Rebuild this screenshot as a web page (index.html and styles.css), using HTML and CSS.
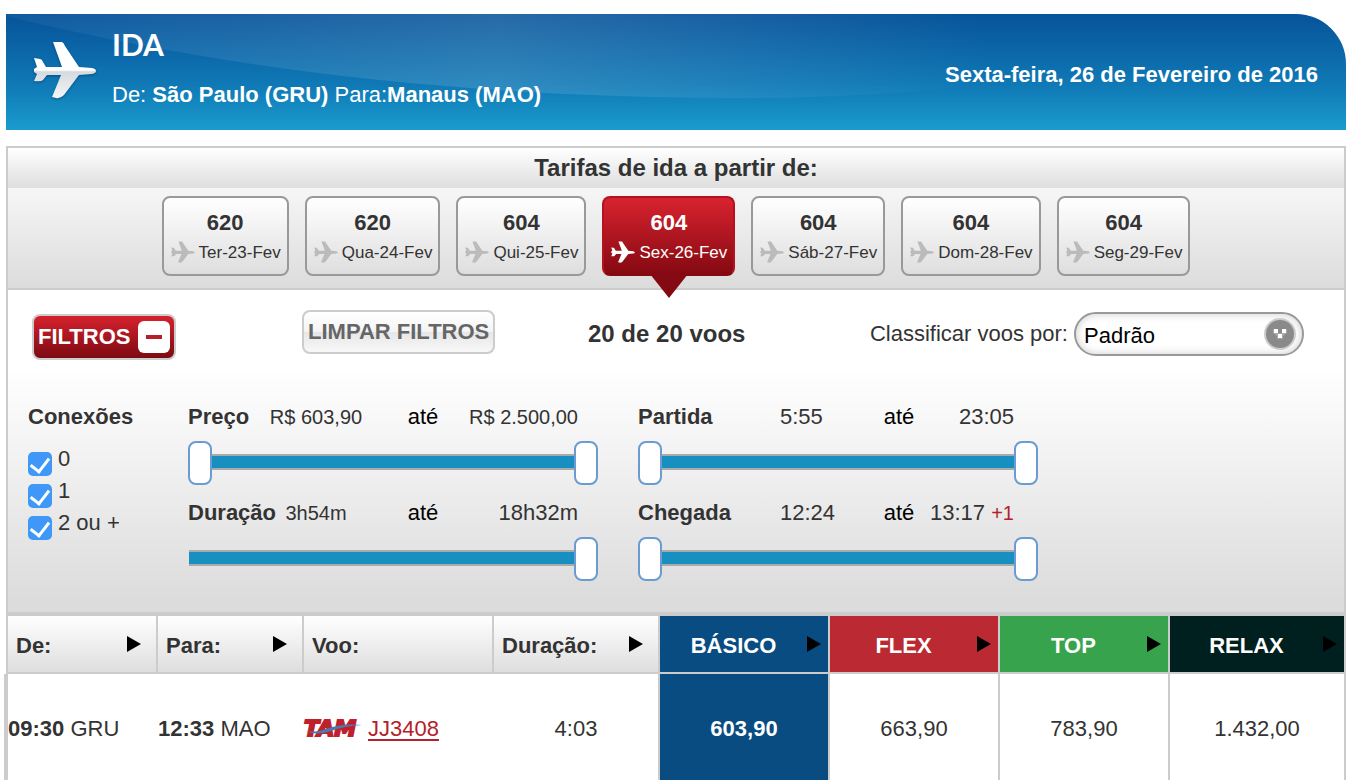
FILE: index.html
```html
<!DOCTYPE html>
<html lang="pt-BR">
<head>
  <meta charset="UTF-8">
  <meta name="viewport" content="width=device-width, initial-scale=1.0">
  <title>Ida - São Paulo (GRU) para Manaus (MAO)</title>
  <link rel="stylesheet" href="styles.css">
</head>
<body>

  <!-- shared icons -->
  <svg class="sprite" aria-hidden="true">
    <symbol id="plane" viewBox="0 0 62 58">
      <path d="M19 1L28 1Q30 2 31 5L45 26L58 27Q62 28 62 30Q62 32 58 33L45 34L30 54Q26 58 22 57L18 56L27 34L13 34L9 39Q7 41 0 40L3 33L0 31L0 28L3 26L0 17L6 18Q8 18 9 21L12 26L28 26Z"/>
    </symbol>
    <symbol id="arrow" viewBox="0 0 14 16">
      <path d="M0 0L14 8L0 16Z"/>
    </symbol>
  </svg>

  <header class="trip">
    <svg class="trip-shine" viewBox="0 0 1340 116" preserveAspectRatio="none" aria-hidden="true">
      <defs>
        <linearGradient id="shine" x1="0" x2="1" y1="0" y2="0">
          <stop offset="0" stop-color="#fff" stop-opacity=".04"/>
          <stop offset=".5" stop-color="#fff" stop-opacity=".13"/>
          <stop offset="1" stop-color="#fff" stop-opacity="0"/>
        </linearGradient>
      </defs>
      <path d="M0 2C200 50 420 82 720 84C800 85 900 80 985 70L985 0L0 0Z" fill="url(#shine)"/>
    </svg>
    <svg class="trip-plane" viewBox="0 0 62 58" aria-hidden="true">
      <defs>
        <linearGradient id="metal" x1="0" x2="0" y1="0" y2="1">
          <stop offset=".5" stop-color="#fff"/>
          <stop offset=".53" stop-color="#d5dade"/>
          <stop offset="1" stop-color="#f4f6f8"/>
        </linearGradient>
      </defs>
      <use href="#plane" fill="url(#metal)"/>
    </svg>
    <div class="trip-info">
      <h1>IDA</h1>
      <p>De: <b>São Paulo (GRU)</b> Para:<b>Manaus (MAO)</b></p>
    </div>
    <p class="trip-date">Sexta-feira, 26 de Fevereiro de 2016</p>
  </header>

  <main class="panel">
    <h2 class="panel-title">Tarifas de ida a partir de:</h2>

    <nav class="days">
      <button class="day"><b>620</b><span><svg><use href="#plane"/></svg>Ter-23-Fev</span></button>
      <button class="day"><b>620</b><span><svg><use href="#plane"/></svg>Qua-24-Fev</span></button>
      <button class="day"><b>604</b><span><svg><use href="#plane"/></svg>Qui-25-Fev</span></button>
      <button class="day active"><b>604</b><span><svg><use href="#plane"/></svg>Sex-26-Fev</span></button>
      <button class="day"><b>604</b><span><svg><use href="#plane"/></svg>Sáb-27-Fev</span></button>
      <button class="day"><b>604</b><span><svg><use href="#plane"/></svg>Dom-28-Fev</span></button>
      <button class="day"><b>604</b><span><svg><use href="#plane"/></svg>Seg-29-Fev</span></button>
    </nav>

    <section class="filters">
      <div class="toolbar">
        <button class="btn-filter">FILTROS <i></i></button>
        <button class="btn-clear">LIMPAR FILTROS</button>
        <strong class="count">20 de 20 voos</strong>
        <div class="sort">
          <label for="sort">Classificar voos por:</label>
          <div class="select">
            <select id="sort">
              <option>Padrão</option>
              <option>Preço</option>
              <option>Duração</option>
            </select>
            <svg viewBox="0 0 32 32" aria-hidden="true">
              <circle cx="16" cy="16" r="16" fill="#ccc"/>
              <circle cx="16" cy="16" r="14" fill="#8a8a8a"/>
              <path d="M9 11h5v4h4v-4h5v4l-4 3v3h-6v-3l-4-3z" fill="#a8a8a8"/>
              <path d="M10 11h4v4h-4zM18 11h4v4h-4zM14 16h4v4h-4z" fill="#fff"/>
            </svg>
          </div>
        </div>
      </div>

      <div class="filter-grid">
        <fieldset class="stops">
          <legend>Conexões</legend>
          <label><input type="checkbox" checked>0</label>
          <label><input type="checkbox" checked>1</label>
          <label><input type="checkbox" checked>2 ou +</label>
        </fieldset>

        <div class="ranges">
          <div class="range-head">
            <b>Preço</b><span class="small from">R$ 603,90</span><em>até</em><span class="small to">R$ 2.500,00</span>
          </div>
          <div class="range">
            <input type="range" min="0" max="100" value="0" aria-label="Preço mínimo">
            <input type="range" min="0" max="100" value="100" aria-label="Preço máximo">
          </div>
          <div class="range-head">
            <b>Duração</b><span class="small from">3h54m</span><em>até</em><span class="to">18h32m</span>
          </div>
          <div class="range">
            <input type="range" min="0" max="100" value="100" aria-label="Duração máxima">
          </div>
        </div>

        <div class="ranges times">
          <div class="range-head">
            <b>Partida</b><span>5:55</span><em>até</em><span class="to">23:05</span>
          </div>
          <div class="range">
            <input type="range" min="0" max="100" value="0" aria-label="Partida a partir de">
            <input type="range" min="0" max="100" value="100" aria-label="Partida até">
          </div>
          <div class="range-head">
            <b>Chegada</b><span>12:24</span><em>até</em><span class="to">13:17 <small>+1</small></span>
          </div>
          <div class="range">
            <input type="range" min="0" max="100" value="0" aria-label="Chegada a partir de">
            <input type="range" min="0" max="100" value="100" aria-label="Chegada até">
          </div>
        </div>
      </div>
    </section>

    <table class="flights">
      <colgroup>
        <col class="c-from"><col class="c-to"><col class="c-flight"><col class="c-time">
        <col class="c-fare"><col class="c-fare"><col class="c-fare"><col class="c-last">
      </colgroup>
      <thead>
        <tr>
          <th><button><span>De:</span><svg><use href="#arrow"/></svg></button></th>
          <th><button><span>Para:</span><svg><use href="#arrow"/></svg></button></th>
          <th><button><span>Voo:</span></button></th>
          <th><button><span>Duração:</span><svg><use href="#arrow"/></svg></button></th>
          <th class="fare basico"><button><span>BÁSICO</span><svg><use href="#arrow"/></svg></button></th>
          <th class="fare flex"><button><span>FLEX</span><svg><use href="#arrow"/></svg></button></th>
          <th class="fare top"><button><span>TOP</span><svg><use href="#arrow"/></svg></button></th>
          <th class="fare relax"><button><span>RELAX</span><svg><use href="#arrow"/></svg></button></th>
        </tr>
      </thead>
      <tbody>
        <tr>
          <td><b>09:30</b> GRU</td>
          <td><b>12:33</b> MAO</td>
          <td>
            <div class="flight">
              <span class="tam">TAM<svg viewBox="0 0 58 18" aria-hidden="true"><path d="M2 11Q12 13 22 9Q38 3 58 5Q40 6 27 11Q13 16 2 11Z"/></svg></span>
              <a href="#">JJ3408</a>
            </div>
          </td>
          <td class="center">4:03</td>
          <td class="center selected">603,90</td>
          <td class="center">663,90</td>
          <td class="center">783,90</td>
          <td class="center">1.432,00</td>
        </tr>
      </tbody>
    </table>
  </main>

</body>
</html>
```
FILE: styles.css
```css
* {
  box-sizing: border-box;
}

body {
  margin: 0;
  padding: 14px 12px 0 6px;
  font-family: "Liberation Sans", Arial, sans-serif;
  font-size: 22px;
  line-height: 26px;
  color: #333;
  background: #fff;
}

h1, h2, p {
  margin: 0;
}

button, select {
  font: inherit;
  color: inherit;
  cursor: pointer;
}

.sprite {
  display: none;
}

/* header */
.trip {
  position: relative;
  display: flex;
  align-items: center;
  height: 116px;
  padding: 0 28px;
  border-radius: 0 50px 0 0;
  overflow: hidden;
  color: #fff;
  background: linear-gradient(#07539a, #0f78b5 60%, #1a9bcd);
}

.trip-shine {
  position: absolute;
  top: 0;
  left: 0;
  width: 100%;
  height: 100%;
}

.trip-plane {
  width: 62px;
  height: 58px;
  margin-right: 16px;
  margin-bottom: 4px;
  filter: drop-shadow(0 1px 1px rgba(0, 40, 80, 0.5));
}

.trip-info {
  position: relative;
  flex: 1;
  padding-bottom: 8px;
}

.trip-info h1 {
  margin-bottom: 22px;
  font-family: Lato, sans-serif;
  font-size: 30px;
  line-height: 32px;
  font-weight: bold;
}

.trip-date {
  position: relative;
  padding-top: 6px;
  font-weight: bold;
}

/* panel */
.panel {
  margin-top: 16px;
  border: 2px solid #ccc;
  border-bottom: 0;
}

.panel-title {
  font-size: 24px;
  line-height: 40px;
  text-align: center;
  background: linear-gradient(#fff, #dedede);
}

.days {
  display: flex;
  justify-content: center;
  gap: 16px;
  padding: 8px 0 12px;
  border-bottom: 2px solid #ccc;
  background: linear-gradient(#f6f6f6, #dcdcdc);
}

.day {
  position: relative;
  height: 80px;
  padding: 4px 6px 0;
  border: 2px solid #999;
  border-radius: 8px;
  background: linear-gradient(#fff, #dedede);
}

.day b {
  display: block;
  line-height: 30px;
}

.day span {
  display: flex;
  align-items: center;
  gap: 3px;
  font-size: 17px;
  line-height: 30px;
}

.day svg {
  width: 26px;
  height: 22px;
  margin-bottom: 2px;
  fill: #bbb;
}

.day.active {
  color: #fff;
  border-color: #b5111f;
  border-bottom-color: #850912;
  background: linear-gradient(#d8232f, #850912);
}

.day.active svg {
  fill: #fff;
}

.day.active::after {
  content: "";
  position: absolute;
  top: 76px;
  left: 50%;
  margin-left: -19px;
  border: 19px solid transparent;
  border-top: 24px solid #850912;
  border-bottom: 0;
}

/* filters */
.filters {
  padding: 20px 40px 31px 20px;
  border-bottom: 4px solid #ccc;
  background: linear-gradient(#fff 25%, #dcdcdc 96%);
}

.toolbar {
  display: grid;
  grid-template-columns: 270px 286px 1fr auto;
  align-items: start;
  padding-left: 4px;
}

.btn-filter {
  justify-self: start;
  display: flex;
  align-items: center;
  gap: 8px;
  height: 46px;
  margin-top: 4px;
  padding: 0 4px;
  border: 2px solid #ccc;
  border-radius: 8px;
  color: #fff;
  font-weight: bold;
  background: linear-gradient(#d5222e, #7d0a13);
}

.btn-filter i {
  display: flex;
  align-items: center;
  width: 32px;
  height: 32px;
  padding: 0 8px;
  border-radius: 6px;
  background: #fff;
}

.btn-filter i::before {
  content: "";
  flex: 1;
  height: 4px;
  background: #b5202b;
}

.btn-clear {
  justify-self: start;
  height: 44px;
  padding: 0 4px;
  border: 2px solid #ccc;
  border-radius: 8px;
  color: #666;
  font-weight: bold;
  background: linear-gradient(#fff, #f4f4f4 50%, #e6e6e6 50%, #f8f8f8);
}

.count {
  font-size: 24px;
  line-height: 48px;
}

.sort {
  display: flex;
  align-items: center;
  gap: 6px;
  margin-top: 2px;
}

.select {
  position: relative;
}

.select select {
  appearance: none;
  display: block;
  width: 230px;
  height: 44px;
  padding: 4px 44px 0 8px;
  border: 2px solid #999;
  border-radius: 22px;
  color: #000;
  background: #fff;
  box-shadow: inset 0 0 8px #ccc;
}

.select svg {
  position: absolute;
  top: 6px;
  right: 8px;
  width: 32px;
  height: 32px;
  pointer-events: none;
}

.filter-grid {
  display: grid;
  grid-template-columns: 160px minmax(0, 410px) minmax(0, 400px);
  margin-top: 44px;
}

.stops {
  margin: 0;
  padding: 0;
  border: 0;
}

.stops legend {
  margin-bottom: 17px;
  padding: 0;
  font-weight: bold;
}

.stops label {
  display: flex;
  gap: 6px;
  height: 32px;
  line-height: 24px;
}

.stops input {
  appearance: none;
  display: grid;
  place-items: center;
  width: 24px;
  height: 24px;
  margin: 5px 0 0;
  border-radius: 5px;
  background: #3f98f7;
}

.stops input:checked::before {
  content: "";
  width: 9px;
  height: 15px;
  margin-bottom: 3px;
  border: solid #fff;
  border-width: 0 3px 3px 0;
  transform: rotate(38deg);
}

.range-head {
  display: grid;
  grid-template-columns: 88px 80px 134px minmax(0, 1fr);
  padding-right: 20px;
  margin-bottom: 11px;
  white-space: nowrap;
}

.times {
  margin-left: 40px;
  margin-right: -40px;
}

.times .range-head {
  grid-template-columns: 142px 80px 78px minmax(0, 1fr);
  padding-right: 24px;
}

.range-head em {
  font-style: normal;
  text-align: center;
  color: #000;
}

.range-head .small {
  font-size: 20px;
}

.range-head .from {
  justify-self: center;
}

.range-head .to {
  justify-self: end;
}

.range-head small {
  font-size: 20px;
  color: #b5202b;
}

/* both thumbs share one track */
.range {
  display: grid;
  align-items: center;
  height: 44px;
  margin-bottom: 15px;
  background: linear-gradient(#aaa, #aaa) 1px 13px / calc(100% - 2px) 16px no-repeat;
}

.range:last-child {
  margin-bottom: 0;
}

.range input {
  appearance: none;
  grid-area: 1 / 1;
  width: 100%;
  height: 44px;
  margin: 0;
  pointer-events: none;
  background: linear-gradient(#178fc1, #178fc1) 1px 15px / calc(100% - 2px) 12px no-repeat;
}

.range input + input {
  background: none;
}

.range input::-webkit-slider-thumb {
  appearance: none;
  width: 24px;
  height: 44px;
  border: 2px solid #6b9bd1;
  border-radius: 8px;
  background: #fff;
  pointer-events: auto;
}

/* flights */
.flights {
  width: 100%;
  table-layout: fixed;
  border-collapse: separate;
  border-spacing: 0;
}

.c-from { width: 150px; }
.c-to { width: 146px; }
.c-flight { width: 190px; }
.c-time { width: 166px; }
.c-fare { width: 170px; }
.c-last { width: 174px; }

.flights th {
  height: 58px;
  padding: 0;
  border-right: 2px solid #ccc;
  border-bottom: 2px solid #ccc;
  text-align: left;
  background: linear-gradient(#fff, #dedede);
}

.flights th:last-child,
.flights td:last-child {
  border-right: 0;
}

.flights th button {
  display: flex;
  align-items: center;
  justify-content: space-between;
  width: 100%;
  padding: 0 15px 0 8px;
  border: 0;
  font-weight: bold;
  background: none;
}

.flights th button span {
  padding-top: 4px;
}

.flights th svg {
  width: 14px;
  height: 16px;
}

.flights .fare {
  color: #fff;
}

.flights .fare button {
  padding: 0 7px 0 0;
}

.flights .fare button span {
  flex: 1;
  text-align: center;
}

.flights .basico { background: #084c81; }
.flights .flex { background: #bb2a32; }
.flights .top { background: #38a34d; }
.flights .relax { background: #00201f; }

.flights td {
  height: 106px;
  padding: 4px 0 0;
}

.flights td:first-child {
  box-shadow: -4px 0 0 #ccc;
}

.flights td.center {
  border-right: 2px solid #ccc;
  text-align: center;
}

.flights td.center:last-child {
  border-right: 0;
}

.flights td.selected {
  color: #fff;
  font-weight: bold;
  background: #084c81;
}

.flight {
  display: flex;
  align-items: center;
  gap: 8px;
}

.flight a {
  color: #b5202b;
  text-underline-offset: 3px;
}

.tam {
  position: relative;
  width: 56px;
  font-family: "DejaVu Sans", sans-serif;
  font-size: 22px;
  font-weight: bold;
  font-style: italic;
  color: #c0202c;
  -webkit-text-stroke: 2px #c0202c;
}

.tam svg {
  position: absolute;
  top: 4px;
  left: 0;
  width: 58px;
  height: 18px;
  fill: #4a78b0;
}
```
